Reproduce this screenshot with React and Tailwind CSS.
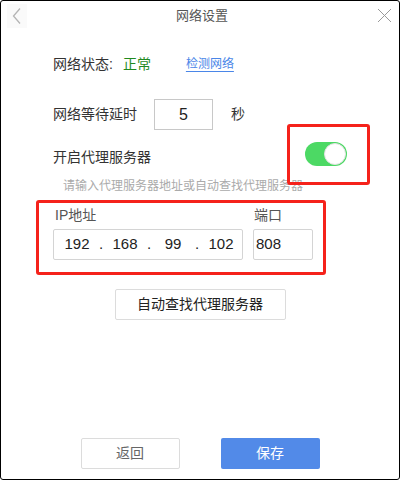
import React, { useState } from 'react';

const FONT = '"Liberation Sans", "Noto Sans CJK SC", sans-serif';

const BackIcon = () => (
  <svg width="10" height="18" viewBox="0 0 10 18" fill="none">
    <path d="M8 1.5L1.5 9L8 16.5" stroke="#b5b5b5" strokeWidth="1.3" />
  </svg>
);

const CloseIcon = () => (
  <svg width="15" height="15" viewBox="0 0 15 15" fill="none">
    <path d="M1 1L14 14M14 1L1 14" stroke="#9a9a9a" strokeWidth="1" />
  </svg>
);

const Toggle = ({ on, onChange }) => (
  <button
    onClick={() => onChange(!on)}
    className={`relative w-[42px] h-[24px] rounded-full ${on ? 'bg-[#4cd964]' : 'bg-[#ddd]'}`}
  >
    <span
      className={`absolute top-[1px] w-[22px] h-[22px] rounded-full bg-white border border-[#e2e2e2] ${on ? 'right-[1px]' : 'left-[1px]'}`}
    />
  </button>
);

const App = () => {
  const [proxy, setProxy] = useState(true);
  const ip = ['192', '168', '99', '102'];

  return (
    <div
      className="w-[400px] h-[480px] bg-white border border-black rounded-[3px] flex flex-col overflow-hidden"
      style={{ fontFamily: FONT }}
    >
      {/* header */}
      <div className="h-[29px] flex items-center justify-between">
        <div className="ml-[6px] w-[20px] h-[24px] bg-[#fafafa] flex items-center justify-center">
          <BackIcon />
        </div>
        <div className="text-[13px] text-[#555]">网络设置</div>
        <div className="mr-[7px] mt-[-1px]">
          <CloseIcon />
        </div>
      </div>

      <div className="px-[52px] flex flex-col">
        {/* status */}
        <div className="mt-[24px] h-[20px] flex items-center text-[14px]">
          <span className="text-[#333]">网络状态:</span>
          <span className="ml-[10px] text-[#1f8a1f]">正常</span>
          <a href="#" className="ml-[35px] text-[12px] text-[#4a86e8] underline underline-offset-[3px]">
            检测网络
          </a>
        </div>

        {/* delay */}
        <div className="mt-[25px] flex items-center text-[14px] text-[#333]">
          <span>网络等待延时</span>
          <div className="ml-[17px] w-[59px] h-[31px] border border-[#c8c8c8] flex items-center justify-center text-[16px] text-[#222]">
            5
          </div>
          <span className="ml-[18px]">秒</span>
        </div>

        {/* proxy toggle */}
        <div className="mt-[15px] h-[24px] flex items-center justify-between">
          <span className="text-[14px] text-[#333]">开启代理服务器</span>
          <div className="relative">
            <Toggle on={proxy} onChange={setProxy} />
            <div className="absolute left-[-18px] right-[-23px] top-[-18px] bottom-[-12px] border-[3px] border-[#f5221b] rounded-[3px] pointer-events-none" />
          </div>
        </div>

        <div className="mt-[9px] ml-[10px] text-[12px] leading-[16px] text-[#aaa] whitespace-nowrap">
          请输入代理服务器地址或自动查找代理服务器
        </div>

        {/* ip + port */}
        <div className="mt-[6px] ml-[-17px] w-[290px] border-[3px] border-[#f5221b] rounded-[3px] pl-[14px] pt-[3px] pb-[12px] flex gap-[10px]">
          <div className="flex flex-col">
            <span className="text-[14px] leading-[18px] text-[#555] pl-[2px]">IP地址</span>
            <div className="mt-[5px] w-[190px] h-[31px] border border-[#d4d4d4] rounded-[2px] flex items-center pl-[5px] text-[15px] text-[#222]">
              {ip.map((seg, i) => (
                <React.Fragment key={i}>
                  {i > 0 && <span className="w-[12px] text-center">.</span>}
                  <span className="w-[36px] text-center">{seg}</span>
                </React.Fragment>
              ))}
            </div>
          </div>
          <div className="flex flex-col">
            <span className="text-[14px] leading-[18px] text-[#555] pl-[1px]">端口</span>
            <div className="mt-[5px] w-[60px] h-[31px] border border-[#d4d4d4] rounded-[2px] flex items-center pl-[2px] text-[15px] text-[#222]">
              808
            </div>
          </div>
        </div>

        <div className="mt-[14px] flex justify-center">
          <button className="w-[171px] h-[31px] border border-[#dcdcdc] rounded-[2px] text-[14px] text-[#222]">
            自动查找代理服务器
          </button>
        </div>
      </div>

      {/* footer */}
      <div className="mt-auto mb-[10px] flex justify-center gap-[41px]">
        <button className="w-[99px] h-[31px] border border-[#dcdcdc] rounded-[2px] text-[14px] text-[#666]">
          返回
        </button>
        <button className="w-[99px] h-[31px] bg-[#528ae8] rounded-[2px] text-[14px] text-white">
          保存
        </button>
      </div>
    </div>
  );
};

export default App;
